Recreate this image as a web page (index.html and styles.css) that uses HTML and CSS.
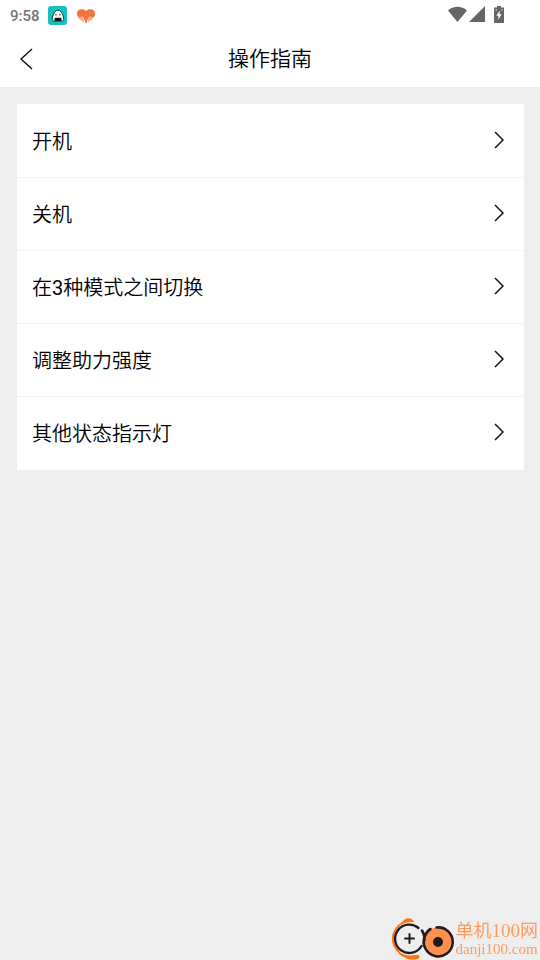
FILE: index.html
```
<!DOCTYPE html>
<html lang="zh-CN">
<head>
<meta charset="utf-8">
<meta name="viewport" content="width=device-width, initial-scale=1">
<title>操作指南</title>
<link rel="stylesheet" href="styles.css">
</head>
<body>
<div class="status">
  <span class="time">9:58</span>
  <svg class="app" viewBox="0 0 20 20" aria-hidden="true">
    <rect x="0" y="0" width="19" height="19" rx="3" fill="#16c1bd"/>
    <path d="M10 4.200C7.600 4.200 6.800 6 5.600 8.200C4.400 10.300 3.500 14 5.500 15H14.500C16.500 14 15.600 10.300 14.400 8.200C13.200 6 12.400 4.200 10 4.200Z" fill="#fff" stroke="#173b3b" stroke-width="1"/>
    <path d="M6.600 11.800H13.400V15H6.600Z" fill="#111"/>
    <circle cx="8" cy="8.700" r=".7" fill="#111"/><circle cx="12" cy="8.700" r=".7" fill="#111"/>
  </svg>
  <svg class="heart" viewBox="0 0 20 16" aria-hidden="true">
    <path d="M10 15C5 12.400 1 9.400 1 5.400C1 1 7.200-.2 10 3C12.800-.2 19 1 19 5.400C19 9.400 15 12.400 10 15Z" fill="#f2743f"/>
    <path d="M8.500 15V12.500L6 8.500M7.500 13L3.500 9M11.500 15V12.500L14 8.500M12.500 13L16.500 9" fill="none" stroke="#fff1e6" stroke-width="1"/>
  </svg>
  <svg class="signals" viewBox="0 0 58 18" aria-hidden="true">
    <path d="M0 4.500C5.500-.5 13.500-.5 19 4.500L9.500 16Z" fill="#666"/>
    <path d="M37 0V16H21Z" fill="#666"/>
    <path d="M49 0H53V1.500H56V17H46V1.500H49Z" fill="#666"/>
    <path d="M51.800 4.500L48.300 9.700H50.500L50.200 13.500L53.700 8.300H51.500Z" fill="#fff"/>
    <path d="M47.500 4H49M53 4H54.500" stroke="#ddd"/>
  </svg>
</div>
<header class="bar">
  <button class="back" type="button" aria-label="返回">
    <svg viewBox="0 0 14 22" aria-hidden="true"><path d="M12 1L1 11L12 21"/></svg>
  </button>
  <h1>操作指南</h1>
</header>
<main>
  <nav class="card">
    <a class="row" href="#on">开机<svg viewBox="0 0 10 18" aria-hidden="true"><path d="M1 1L9 9L1 17"/></svg></a>
    <a class="row" href="#off">关机<svg viewBox="0 0 10 18" aria-hidden="true"><path d="M1 1L9 9L1 17"/></svg></a>
    <a class="row" href="#modes">在3种模式之间切换<svg viewBox="0 0 10 18" aria-hidden="true"><path d="M1 1L9 9L1 17"/></svg></a>
    <a class="row" href="#assist">调整助力强度<svg viewBox="0 0 10 18" aria-hidden="true"><path d="M1 1L9 9L1 17"/></svg></a>
    <a class="row" href="#lights">其他状态指示灯<svg viewBox="0 0 10 18" aria-hidden="true"><path d="M1 1L9 9L1 17"/></svg></a>
  </nav>
</main>
<div class="mark">
  <svg viewBox="0 0 66 44" aria-hidden="true">
    <path d="M9.500 9C1 17 .5 28 9 36" fill="none" stroke="#ff7312" stroke-width="2"/>
    <path d="M7 34C11 38 16 39.500 20 39.500C24 39.500 26 38.500 29 39.500C31 42 27 44 22 43.500C16 43 9 40 7 34Z" fill="#ff7312"/>
    <path d="M8 11C9 7 12 7 14 4C18 .5 23 2.500 24.500 6.500C18 5 12 7.500 8 11Z" fill="#ff7312"/>
    <path d="M28.500 12A14.200 14.200 0 1 0 31.500 30" fill="none" stroke="#221c20" stroke-width="2.400" stroke-linecap="round"/>
    <circle cx="48" cy="26" r="14.500" fill="#ff914d"/>
    <path d="M46.500 11.500A14.500 14.500 0 1 1 35 20M32 14.500Q36 21 33.500 27M35 20Q37 15 40.500 13" fill="none" stroke="#221c20" stroke-width="2.600" stroke-linecap="round"/>
    <circle cx="48" cy="26" r="5" fill="#221c20"/>
    <path d="M19.500 18V27M15 22.500H24" stroke="#221c20" stroke-width="2" stroke-linecap="round"/>
  </svg>
  <div class="words"><span class="name">单机<span class="digits">100</span>网</span><span class="site">danji100.com</span></div>
</div>
</body>
</html>
```
FILE: styles.css
```
* { box-sizing: border-box; }
body {
  margin: 0;
  min-height: 100vh;
  background: #eee;
  color: #000;
  font-family: Roboto, "Noto Sans CJK SC DemiLight", "Noto Sans CJK SC", sans-serif;
}
svg { display: block; flex: none; }
.status {
  display: flex;
  align-items: center;
  height: 32px;
  padding: 0 34px 0 10px;
  background: #fff;
}
.time {
  width: 38px;
  font-size: 15px;
  font-weight: 500;
  color: #757575;
}
.app { width: 20px; height: 20px; }
.heart { width: 20px; height: 16px; margin-left: 8px; }
.signals { width: 58px; height: 18px; margin: 0 0 2px auto; }
.bar {
  display: grid;
  grid-template-columns: 56px 1fr 56px;
  align-items: center;
  height: 55px;
  padding-bottom: 1px;
  background: #fff;
}
.back {
  height: 54px;
  padding: 0 0 0 20px;
  border: 0;
  background: none;
}
.back svg { width: 14px; height: 22px; }
.back path, .row path { fill: none; stroke: #111; stroke-width: 1.5; }
h1 {
  margin: 0;
  font-size: 21px;
  line-height: 32px;
  font-weight: 400;
  text-align: center;
}
main { padding: 17px 16px 17px 17px; }
.card { padding-top: 1px; background: #fff; }
.row {
  display: flex;
  align-items: center;
  justify-content: space-between;
  height: 73px;
  padding: 0 20px 2px 15px;
  border-bottom: 1px solid #f4f4f4;
  color: #000;
  font-size: 20px;
  text-decoration: none;
}
.row:last-child { border-bottom-color: transparent; }
.row svg { width: 10px; height: 18px; }
.mark {
  position: fixed;
  right: 2px;
  bottom: 0;
  display: flex;
  color: #ff9a5c;
  font-family: "Liberation Serif", "Noto Sans CJK SC", serif;
}
.mark svg { width: 66px; height: 44px; }
.words {
  display: flex;
  flex-direction: column;
  padding-top: 5px;
  white-space: nowrap;
}
.name { font-size: 18px; line-height: 20px; }
.digits { font-size: 19px; }
.site { font-size: 15px; line-height: 16px; }
```
